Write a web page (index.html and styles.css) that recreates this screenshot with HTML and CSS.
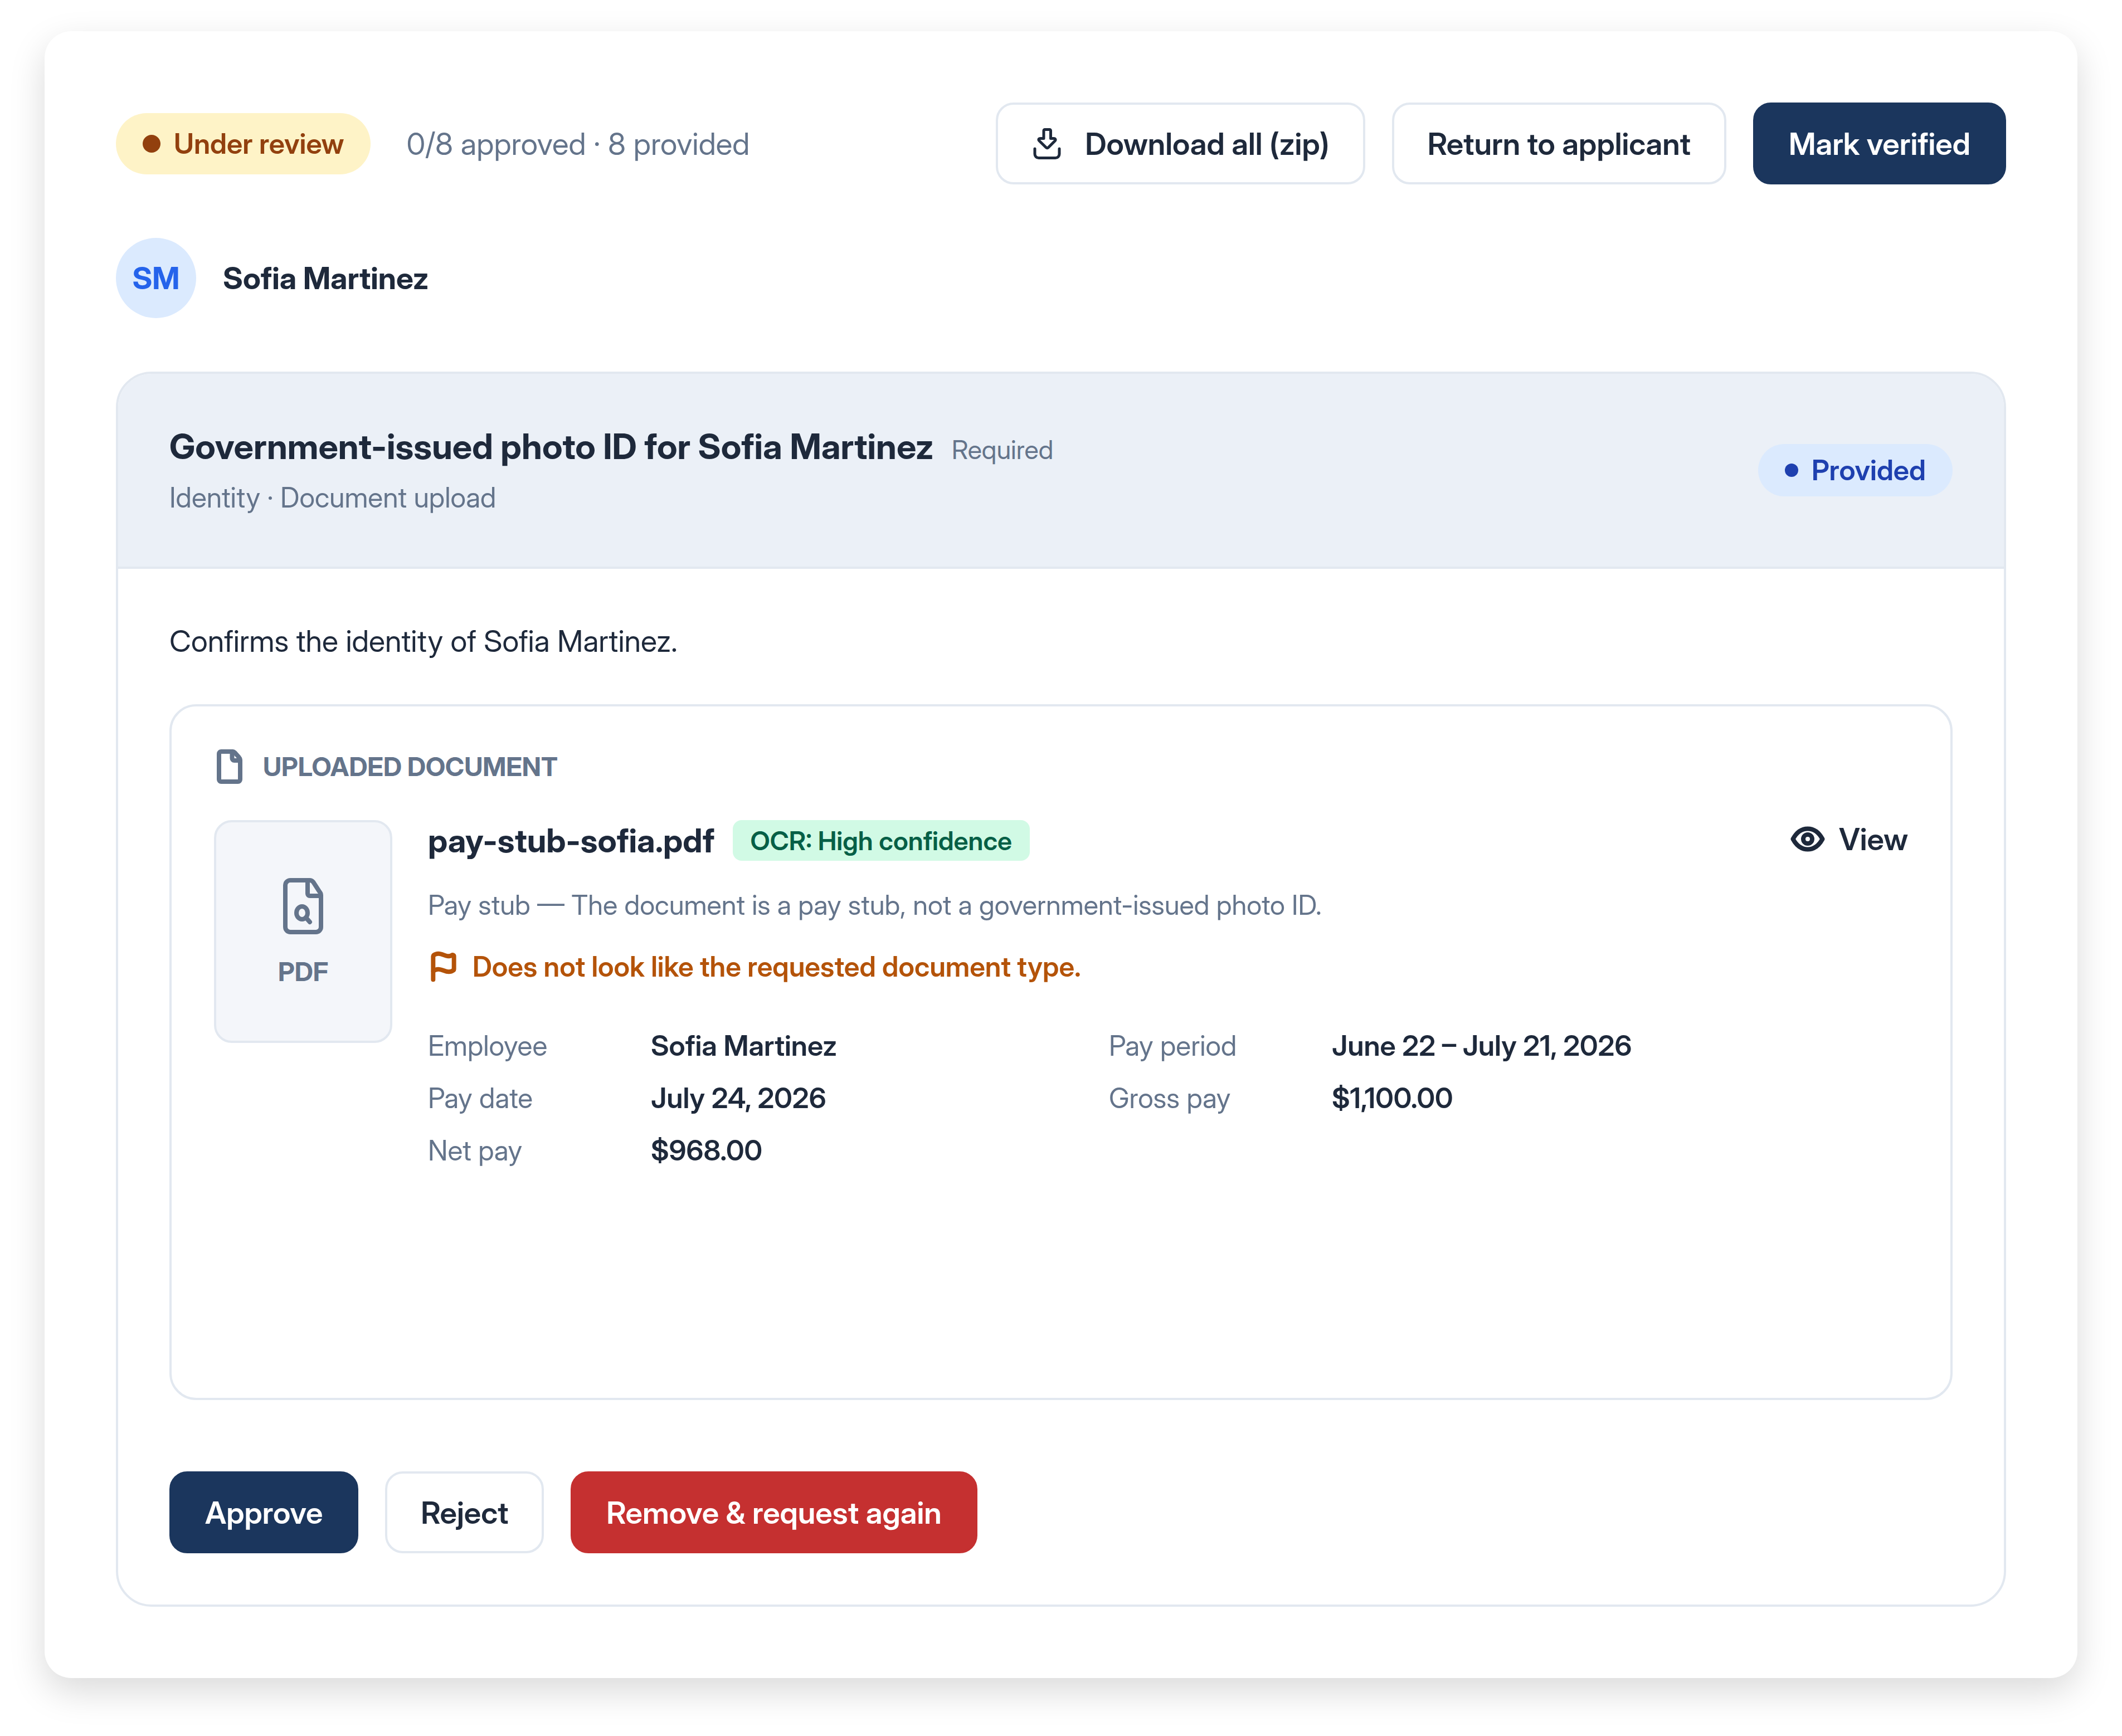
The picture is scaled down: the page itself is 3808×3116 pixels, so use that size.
FILE: index.html
```html
<!DOCTYPE html>
<html lang="en">
<head>
<meta charset="UTF-8">
<title>Document review</title>
<link rel="stylesheet" href="styles.css">
</head>
<body>

<main class="card">

<header class="toolbar">
<span class="status"><span class="dot"></span>Under review</span>
<span class="progress">0/8 approved · 8 provided</span>
<div class="toolbar-actions">
<button type="button" class="btn">
<svg class="icon-download" viewBox="0 0 56 56"><path d="M24 2.500h8.500a2 2 0 0 1 2 2v14h5.500c3 0 4 2.500 2 4.500L30 35c-1 1-2.500 1-3.500 0L14 22.800c-2-2-1-4.300 2-4.300h6v-14a2 2 0 0 1 2-2z"/><path d="M6 37v9.500a7 7 0 0 0 7 7h30a7 7 0 0 0 7-7V37"/></svg>
Download all (zip)
</button>
<button type="button" class="btn">Return to applicant</button>
<button type="button" class="btn btn-primary">Mark verified</button>
</div>
</header>

<section class="applicant">
<span class="avatar">SM</span>
<span class="applicant-name">Sofia Martinez</span>
</section>

<section class="panel">

<header class="panel-head">
<div>
<div class="panel-title">
<h2>Government-issued photo ID for Sofia Martinez</h2>
<span class="required">Required</span>
</div>
<p class="panel-sub">Identity · Document upload</p>
</div>
<span class="provided"><span class="dot"></span>Provided</span>
</header>

<div class="panel-body">
<p class="purpose">Confirms the identity of Sofia Martinez.</p>

<article class="document">
<h3 class="document-label">
<svg class="icon-doc" viewBox="0 0 56 64"><path d="M34 5H13a4 4 0 0 0-4 4v46a4 4 0 0 0 4 4h30a4 4 0 0 0 4-4V20c0-2-.5-3-2-4.500l-8-9C36 5.500 35.500 5 34 5z"/><path d="M32.500 6v11a4 4 0 0 0 4 4H46"/></svg>
Uploaded document
</h3>
<div class="document-row">
<div class="thumb">
<svg class="icon-file" viewBox="0 0 80 104"><path d="M52 6H17a9 9 0 0 0-9 9v75a9 9 0 0 0 9 9h46a9 9 0 0 0 9-9V33c0-3-1-5-3-7L58 9c-2-2-4-3-6-3z"/><path d="M48 7v23a4 4 0 0 0 4 4h19"/><ellipse cx="38" cy="64.500" rx="10" ry="11.500"/><path d="M45 73l7 8"/></svg>
PDF
</div>
<div class="details">
<div class="file-line">
<h4>pay-stub-sofia.pdf</h4>
<span class="ocr">OCR: High confidence</span>
</div>
<p class="summary">Pay stub — The document is a pay stub, not a government-issued photo ID.</p>
<p class="warning">
<svg class="icon-flag" viewBox="0 0 24 24"><path d="M4 22V4a1 1 0 0 1 .4-.8A6 6 0 0 1 8 2c3 0 5 2 7.333 2q2 0 3.067-.8A1 1 0 0 1 20 4v10a1 1 0 0 1-.4.8A6 6 0 0 1 16 16c-3 0-5-2-8-2a6 6 0 0 0-4 1.528"/></svg>
Does not look like the requested document type.
</p>
<dl class="fields">
<div class="field"><dt>Employee</dt><dd>Sofia Martinez</dd></div>
<div class="field"><dt>Pay period</dt><dd>June 22 – July 21, 2026</dd></div>
<div class="field"><dt>Pay date</dt><dd>July 24, 2026</dd></div>
<div class="field"><dt>Gross pay</dt><dd>$1,100.00</dd></div>
<div class="field"><dt>Net pay</dt><dd>$968.00</dd></div>
</dl>
</div>
<button type="button" class="view">
<svg class="icon-eye" viewBox="0 0 64 64"><path d="M5.500 32C12 20 21 13.500 32 13.500S52 20 58.500 32C52 44 43 50.500 32 50.500S12 44 5.500 32z"/><circle cx="32" cy="32" r="8"/></svg>
View
</button>
</div>
</article>

<div class="actions">
<button type="button" class="btn btn-primary">Approve</button>
<button type="button" class="btn">Reject</button>
<button type="button" class="btn btn-danger">Remove &amp; request again</button>
</div>
</div>

</section>

</main>

</body>
</html>
```

FILE: styles.css
```css
* {
	box-sizing: border-box;
}

body {
	margin: 0;
	padding: 56px 80px 104px;
	background: #fff;
	color: #1e293b;
	font-family: "Inter Display", Inter, "Liberation Sans", sans-serif;
	font-variation-settings: "opsz" 32;
	font-size: 55px;
	line-height: 80px;
}

h2, h3, h4, p, dl, dd {
	margin: 0;
}

button {
	font-family: inherit;
	font-variation-settings: inherit;
	color: inherit;
	cursor: pointer;
}

svg {
	flex: none;
	fill: none;
	stroke: currentColor;
	stroke-width: 8;
	stroke-linecap: round;
	stroke-linejoin: round;
}

.card {
	padding: 128px;
	border-radius: 48px;
	background: #fff;
	box-shadow: 0 24px 64px rgba(0, 0, 0, 0.15);
}

/* top bar */
.toolbar {
	display: flex;
	align-items: center;
	gap: 64px;
}

.toolbar-actions {
	display: flex;
	gap: 48px;
	margin-left: auto;
}

.status, .provided {
	display: flex;
	align-items: center;
	gap: 24px;
	padding: 0 48px;
	border-radius: 999px;
	font-size: 51px;
	font-weight: 600;
}

.status {
	height: 110px;
	background: #fef3c7;
	color: #92400e;
}

.dot {
	width: 24px;
	height: 24px;
	border-radius: 50%;
	background: currentColor;
}

.status .dot {
	width: 32px;
	height: 32px;
}

.progress {
	color: #64748b;
}

.btn {
	display: flex;
	align-items: center;
	gap: 40px;
	height: 147px;
	padding: 0 60px;
	border: 4px solid #e2e8f0;
	border-radius: 32px;
	background: #fff;
	font-size: 55px;
	font-weight: 600;
}

.btn-primary {
	border-color: #1b365d;
	background: #1b365d;
	color: #fff;
}

.btn-danger {
	border-color: #c53030;
	background: #c53030;
	color: #fff;
}

.icon-download {
	width: 56px;
	height: 56px;
	stroke-width: 5;
}

.applicant {
	display: flex;
	align-items: center;
	gap: 48px;
	margin: 96px 0;
}

.avatar {
	display: grid;
	place-items: center;
	width: 144px;
	height: 144px;
	border-radius: 50%;
	background: #dbeafe;
	color: #2563eb;
	font-weight: 700;
}

.applicant-name {
	font-weight: 700;
}

/* requirement panel */
.panel {
	overflow: hidden;
	border: 4px solid #e2e8f0;
	border-radius: 64px;
}

.panel-head {
	display: flex;
	align-items: center;
	justify-content: space-between;
	padding: 92px;
	border-bottom: 4px solid #e2e8f0;
	background: #ebf0f7;
}

.panel-title {
	display: flex;
	align-items: baseline;
	gap: 32px;
}

.panel-title h2 {
	font-size: 63px;
	font-weight: 700;
	line-height: 76px;
}

.required {
	color: #64748b;
	font-size: 47px;
	line-height: 60px;
}

.panel-sub {
	margin-top: 22px;
	color: #64748b;
	font-size: 50px;
	line-height: 64px;
}

.provided {
	height: 94px;
	background: #dbeafe;
	color: #1e40af;
}

.panel-body {
	padding: 92px;
}

.purpose {
	font-size: 54px;
	line-height: 75px;
}

/* uploaded document */
.document {
	min-height: 1249px;
	margin-top: 76px;
	padding: 76px;
	border: 4px solid #e2e8f0;
	border-radius: 48px;
}

.document-label {
	display: flex;
	align-items: center;
	gap: 32px;
	height: 64px;
	margin-bottom: 64px;
	color: #64748b;
	font-size: 47px;
	font-weight: 700;
	text-transform: uppercase;
}

.icon-doc {
	width: 56px;
	height: 64px;
}

.document-row {
	display: flex;
	align-items: flex-start;
}

.thumb {
	display: flex;
	flex-direction: column;
	align-items: center;
	justify-content: center;
	gap: 40px;
	width: 320px;
	height: 400px;
	margin-right: 64px;
	border: 4px solid #e2e8f0;
	border-radius: 32px;
	background: #f4f6fa;
	color: #64748b;
	font-size: 47px;
	font-weight: 700;
	line-height: 52px;
}

.icon-file {
	width: 80px;
	height: 104px;
}

.details {
	flex: 1;
}

.file-line {
	display: flex;
	align-items: center;
	gap: 32px;
	line-height: 73px;
}

.file-line h4 {
	font-size: 59px;
	font-weight: 700;
}

.ocr {
	padding: 0 32px;
	border-radius: 16px;
	background: #d1fae5;
	color: #065f46;
	font-size: 47px;
	font-weight: 600;
}

.summary {
	margin-top: 40px;
	color: #64748b;
	font-size: 49px;
}

.warning {
	display: flex;
	align-items: center;
	gap: 24px;
	margin-top: 30px;
	color: #b45309;
	font-size: 50px;
	font-weight: 600;
}

.icon-flag {
	width: 56px;
	height: 56px;
	stroke-width: 3.4;
}

.fields {
	display: grid;
	grid-template-columns: 1fr 1fr;
	gap: 14px 48px;
	margin-top: 62px;
	font-size: 50px;
}

.field {
	display: flex;
}

.field dt {
	width: 400px;
	color: #64748b;
}

.field dd {
	font-size: 51px;
	font-weight: 600;
}

.view {
	display: flex;
	align-items: center;
	gap: 24px;
	margin-left: 48px;
	padding: 0;
	border: 0;
	background: none;
	font-size: 55px;
	font-weight: 600;
	line-height: 68px;
}

.icon-eye {
	width: 64px;
	height: 64px;
}

.actions {
	display: flex;
	gap: 48px;
	margin-top: 128px;
}
```
